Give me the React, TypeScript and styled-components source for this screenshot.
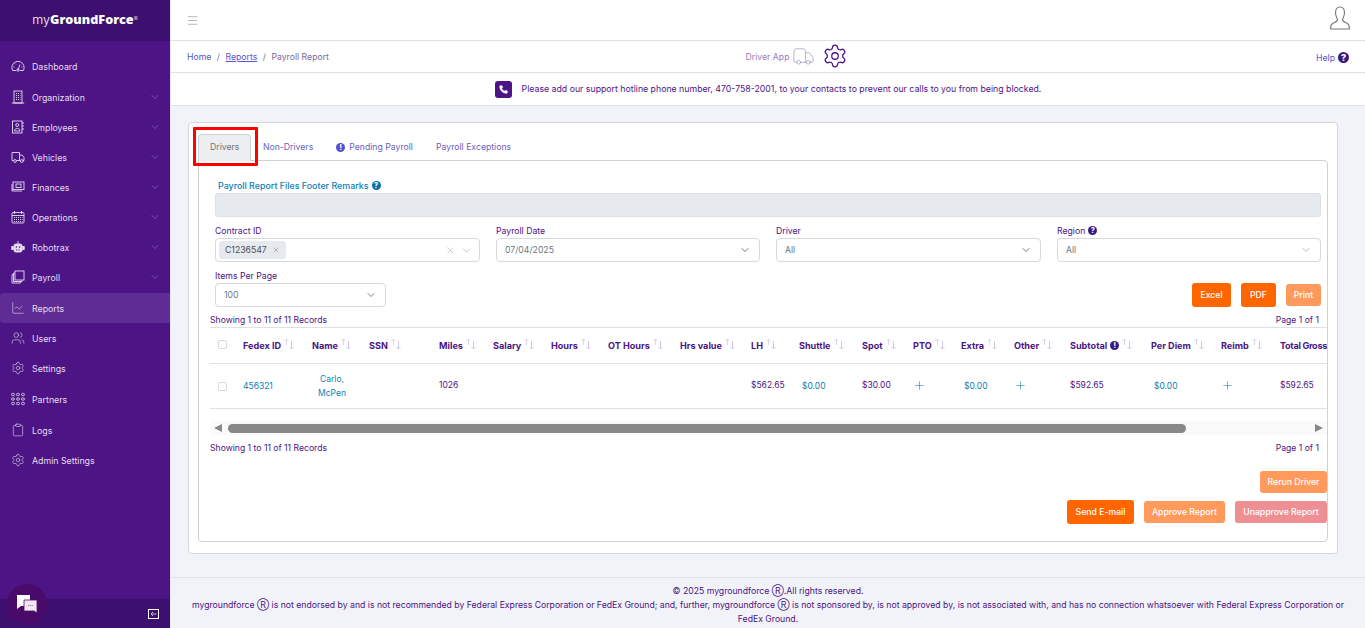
import React from "react";
import styled, { createGlobalStyle } from "styled-components";
import { ChartLine, Users, Settings, Clipboard, ChevronDown, Menu, X, Plus, Phone, Truck } from "lucide-react";

const PURPLE = "#4c1484";
const LINK = "#0a7fb5";
const FONT = `Inter, "Liberation Sans", sans-serif`;

const Global = createGlobalStyle`
  html, body { margin: 0; padding: 0; height: 628px; overflow: hidden; background: #fff; }
  #root { height: 628px; }
  * { box-sizing: border-box; }
  body { font-family: ${FONT}; font-size: 8.7px; color: ${PURPLE}; }
`;

const Page = styled.div`display: flex; width: 1365px; height: 628px; overflow: hidden; position: relative;`;
const Sidebar = styled.aside`width: 170px; flex: none; background: ${PURPLE}; display: flex; flex-direction: column; color: #e4d8f0;`;
const Brand = styled.div`height: 41px; background: #3d0f6e; color: #fff; display: flex; align-items: center; justify-content: center; font-size: 12.6px; padding-bottom: 3px; font-weight: 300;`;
const BrandBold = styled.b`font-weight: 900; font-family: "Open Sans", sans-serif;`;
const BrandMark = styled.sup`font-size: 6px; line-height: 0;`;
const Nav = styled.nav`padding-top: 10px; flex: 1; display: flex; flex-direction: column;`;
const Item = styled.div<{ $active?: boolean; $gap?: boolean }>`
  height: 30px; flex: none; display: flex; align-items: center; padding: 0 9px 0 11px; gap: 7px; margin-top: ${(p) => (p.$gap ? "1px" : "0")};
  background: ${(p) => (p.$active ? "#5f2b94" : "transparent")}; border-radius: ${(p) => (p.$active ? "3px 0 0 3px" : "0")};
  font-size: 8.8px; color: #e6dcf2;
  span { flex: 1; }
`;
const SideFoot = styled.div`height: 29px; background: #3d0f6e; display: flex; justify-content: flex-end; align-items: center; padding-right: 11px; color: #fff;`;
const Chat = styled.div`position: absolute; left: 7px; top: 584px; width: 40px; height: 40px; border-radius: 50%; background: #4a0a6a; display: flex; align-items: center; justify-content: center; color: #fff;`;

const Main = styled.main`flex: 1; min-width: 0; display: flex; flex-direction: column; background: #f1f3f8; border-left: 1px solid #e4e6ec;`;
const TopBar = styled.header`height: 41px; flex: none; background: #fff; border-bottom: 1px solid #dee1e8; display: flex; align-items: center; justify-content: space-between; padding: 0 15px 0 15px; color: #888;`;
const Crumbs = styled.div`height: 32px; flex: none; background: #fff; border-bottom: 1px solid #dee1e8; display: grid; grid-template-columns: 1fr auto 1fr; align-items: center; padding: 0 16px 0 16px;`;
const CrumbLeft = styled.div`display: flex; gap: 5.5px; font-size: 8.7px; color: #7a6aa0;`;
const CrumbLink = styled.a<{ $u?: boolean }>`color: #5a55c8; text-decoration: ${(p) => (p.$u ? "underline" : "none")};`;
const DriverApp = styled.div`display: flex; align-items: center; gap: 3px; color: #9a7cc0; font-size: 8.7px; position: relative; left: 29px;`;
const GearWrap = styled.div`color: ${PURPLE}; margin-left: 4px; display: flex; margin-top: -2px;`;
const Help = styled.div`justify-self: end; display: flex; align-items: center; gap: 3px; color: #5a55c8; font-size: 8.7px; padding-top: 2px;`;
const Dot = styled.span<{ $c?: string; $s?: number }>`
  display: inline-flex; align-items: center; justify-content: center; width: ${(p) => p.$s ?? 9}px; height: ${(p) => p.$s ?? 9}px; border-radius: 50%;
  background: ${(p) => p.$c ?? "#3a1a80"}; color: #fff; font-size: ${(p) => (p.$s ?? 9) - 2}px; font-weight: 800; line-height: 1;
`;
const Notice = styled.div`height: 33px; flex: none; background: #fff; border-bottom: 1px solid #dee1e8; display: flex; align-items: center; justify-content: center; gap: 10px; font-size: 8.75px;`;
const PhoneBox = styled.div`width: 17px; height: 17px; border-radius: 3px; background: ${PURPLE}; color: #fff; display: flex; align-items: center; justify-content: center;`;
const Content = styled.div`flex: 1; min-height: 0; padding: 16px 27px 24px 17px;`;
const Card = styled.div`height: 432px; background: #fff; border: 1px solid #d4d6da; border-radius: 4px; padding: 11px 9px 11px 9px; position: relative; display: flex; flex-direction: column;`;
const Tabs = styled.div`display: flex; height: 27px; flex: none; align-items: stretch; position: relative; margin-bottom: -1px; z-index: 1;`;
const Tab = styled.div<{ $active?: boolean }>`
  display: flex; align-items: center; gap: 4px; padding: 0 ${(p) => (p.$active ? "11px" : "10.5px")} 2px; font-size: 8.7px; height: 27px; border-radius: 4px 4px 0 0;
  color: ${(p) => (p.$active ? "#6c757d" : "#6a5fc0")}; background: ${(p) => (p.$active ? "#eceef0" : "transparent")};
  border: 1px solid ${(p) => (p.$active ? "#cfd1d4" : "transparent")}; border-bottom: none;
`;
const Highlight = styled.div`position: absolute; left: 4px; top: 4px; width: 65px; height: 39px; border: 3px solid #f00; pointer-events: none; z-index: 2; border-radius: 1px;`;
const Panel = styled.div`flex: 1; border: 1px solid #cfd1d4; border-radius: 0 4px 4px 4px; padding: 18px 0 0 0; display: flex; flex-direction: column; min-width: 0;`;
const Form = styled.div`padding: 0 6px 0 16px;`;
const RemarkLabel = styled.div`color: ${LINK}; font-size: 8.9px; font-weight: 500; padding-left: 3px; display: flex; align-items: center; gap: 3px; height: 13px;`;
const RemarkBox = styled.div`height: 24px; margin-top: 1px; background: #e6e9ee; border: 1px solid #dde0e5; border-radius: 3px;`;
const FilterGrid = styled.div`display: grid; grid-template-columns: 265px 264px 265px 264px; column-gap: 16px; margin-top: 8px;`;
const Field = styled.div`display: flex; flex-direction: column;`;
const Label = styled.label`font-size: 8.7px; height: 13px; padding-bottom: 2px; display: flex; align-items: center; gap: 3px;`;
const SelectBox = styled.div<{ $w?: number; $tight?: boolean }>`
  height: 24px; width: ${(p) => (p.$w ? `${p.$w}px` : "auto")}; border: 1px solid #d6d9de; border-radius: 4px; background: #fff; display: flex; align-items: center;
  padding: 0 ${(p) => (p.$tight ? "6px" : "8px")} 0 8px; font-size: 8.7px; color: #6c757d; gap: 4px; justify-content: space-between;
`;
const Chip = styled.span`height: 18px; background: #e6e9ee; border-radius: 3px; margin-left: -5px; padding: 0 6px; display: inline-flex; align-items: center; gap: 5px; color: #495057;`;
const Spacer = styled.div`flex: 1;`;
const PerRow = styled.div`display: flex; align-items: flex-end; gap: 10px; margin-top: 8px;`;
const Btn = styled.button<{ $bg?: string; $w: number; $h?: number }>`
  width: ${(p) => p.$w}px; height: ${(p) => p.$h ?? 22}px; border: none; border-radius: 3px; background: ${(p) => p.$bg ?? "#ff6600"}; color: #fff; font: 500 8.7px ${FONT}; padding: 0;
`;
const PrintBtn = styled(Btn)`margin-bottom: 1px;`;
const Meta = styled.div<{ $top: number }>`display: flex; justify-content: space-between; padding: 0 8px 0 11px; font-size: 8.65px; height: 14px; align-items: center; margin-top: ${(p) => p.$top}px;`;
const TableWrap = styled.div`margin: 0 0 0 11px; width: 1117px; overflow: hidden;`;
const Row = styled.div<{ $h: number }>`
  display: grid; height: ${(p) => p.$h}px; align-items: center; width: 1180px;
  grid-template-columns: 33px 69px 57px 70px 54px 58px 57px 72px 71px 48px 63px 51px 48px 53px 56px 81px 70px 59px 100px;
  border-bottom: 1px solid #dee1e8;
`;
const Head = styled(Row)`border-top: 1px solid #dee1e8; font-weight: 700; font-size: 9.1px;`;
const HeadCell = styled.div`display: flex; align-items: center; white-space: nowrap;`;
const LastHead = styled(HeadCell)`letter-spacing: -0.3px;`;
const HeadCheck = styled.div`margin-top: -3px;`;
const Cell = styled.div<{ $link?: boolean; $center?: boolean; $inset?: boolean }>`
  color: ${(p) => (p.$link ? LINK : PURPLE)}; font-size: 8.5px; line-height: 14px; white-space: nowrap;
  text-align: ${(p) => (p.$center ? "center" : "left")}; width: ${(p) => (p.$center ? "40px" : "auto")};
  padding-left: ${(p) => (p.$inset ? "3px" : "0")}; margin-top: ${(p) => (p.$link ? "0" : "-2px")};
`;
const Check = styled.div`width: 9px; height: 9px; border: 1px solid #d6d9de; border-radius: 2px; margin-left: 8px;`;
const ScrollBar = styled.div`margin: 12px 0 0 11px; width: 1117px; height: 14px; background: #fafafa; display: flex; align-items: center; padding: 0 4px; gap: 6px;`;
const Arrow = styled.span<{ $dir: "l" | "r" }>`
  width: 0; height: 0; border-top: 4.5px solid transparent; border-bottom: 4.5px solid transparent;
  ${(p) => (p.$dir === "l" ? "border-right: 8px solid #888;" : "border-left: 8px solid #888; margin-left: auto;")}
`;
const Thumb = styled.div`width: 958px; height: 9px; border-radius: 5px; background: #888;`;
const Actions = styled.div`margin-top: 16px; display: flex; flex-direction: column; align-items: flex-end; gap: 7px;`;
const ActionRow = styled.div`display: flex; align-items: center; gap: 10px;`;
const Footer = styled.footer`height: 51px; flex: none; border-top: 1px solid #dee1e8; background: #f1f3f8; padding: 6px 20px 0; text-align: center; font-size: 8.68px; line-height: 14px;`;
const SvgIcon = styled.svg`flex: none; fill: none; stroke: currentColor; stroke-width: 0.9;`;

const Ico = ({ children, s = 14 }: { children: React.ReactNode; s?: number }) => (
  <SvgIcon width={s} height={s} viewBox="0 0 14 14">{children}</SvgIcon>
);

const GaugeI = () => (
  <Ico>
    <path d="M1.6 11.5 A6 6 0 0 1 0.9 8.5 A6.1 6.1 0 0 1 13.1 8.5 A6 6 0 0 1 12.4 11.5 H9" />
    <path d="M5 11.5 H1.6 M7 11 L9 5.5 M2.5 8 H3.5 M4 4.5 L4.7 5.2 M11.5 8 H10.5" />
    <circle cx="7" cy="11" r="1.2" />
  </Ico>
);
const BuildingI = () => (
  <Ico>
    <rect x="3" y="1" width="8" height="12" />
    <path d="M0.8 13 H13.2" />
    <path strokeDasharray="1 1" d="M5 3.5 H9.5 M5 5.5 H9.5 M5 7.5 H9.5 M5 9.5 H9.5" />
  </Ico>
);
const BookI = () => (
  <Ico>
    <rect x="1.5" y="1" width="9.5" height="12" />
    <circle cx="6.2" cy="5" r="1.5" />
    <path d="M3.5 11 C3.5 7.5 9 7.5 9 11 Z M11 3 H13 M11 6 H13 M11 9 H13" />
  </Ico>
);
const TruckI = () => (
  <Ico>
    <path d="M2.5 10.5 H1 V2.5 H8.5 V10.5 H5.5 M8.5 5 H11 L13 7.5 V10.5 H12 M8.5 10.5 H9.5" />
    <circle cx="4" cy="11" r="1.4" />
    <circle cx="10.8" cy="11" r="1.4" />
  </Ico>
);
const FinanceI = () => (
  <Ico>
    <rect x="2" y="2" width="11" height="7.5" />
    <path d="M1 4 V11 H11" />
    <rect x="5" y="4" width="5" height="3.5" />
  </Ico>
);
const CalendarI = () => (
  <Ico>
    <rect x="1" y="2.5" width="12" height="10.5" rx="1" />
    <path d="M3.5 1 V4 M10.5 1 V4 M1 5.5 H13" />
    <path strokeDasharray="1 1" d="M3 7.5 H11.5 M3 9.5 H11.5 M3 11.5 H11.5" />
  </Ico>
);
const BotI = () => (
  <Ico>
    <path d="M7 1 V4" />
    <rect x="3" y="4" width="8" height="8" rx="1.8" fill="currentColor" />
    <rect x="0.8" y="6.5" width="1.5" height="3" fill="currentColor" />
    <rect x="11.7" y="6.5" width="1.5" height="3" fill="currentColor" />
    <circle cx="5.4" cy="7" r="0.8" fill="#4c1484" stroke="none" />
    <circle cx="8.6" cy="7" r="0.8" fill="#4c1484" stroke="none" />
    <path d="M5 10 H9" stroke="#4c1484" strokeDasharray="1 0.7" />
  </Ico>
);
const CopyI = () => (
  <Ico>
    <rect x="4" y="1" width="9" height="9" />
    <path d="M4 3 H2.5 V11.5 H11 V10 M2.5 4.5 H1 V13 H9.5 V11.5" />
  </Ico>
);
const GridI = () => (
  <Ico>
    {[2, 7, 12].map((x) => [2.5, 7, 11.5].map((y) => <rect key={`${x}${y}`} x={x - 1.4} y={y - 1.1} width="2.8" height="2.2" rx="0.9" />))}
  </Ico>
);
const Lu = (C: React.ElementType) => () => <C size={14} strokeWidth={1} />;

const SortIcon = () => (
  <svg width="14" height="13" viewBox="0 0 14 13" fill="none" stroke="#d3c8e6" strokeWidth="1" style={{ marginLeft: 2, marginTop: -2, flex: "none" }}>
    <path d="M3.5 7 V1 M1.5 3 L3.5 1 L5.5 3" opacity="0.75" />
    <path d="M8.5 3 V11 M6.5 9 L8.5 11 L10.5 9" />
  </svg>
);

const nav: [string, React.ElementType, boolean, boolean?, boolean?][] = [
  ["Dashboard", GaugeI, false],
  ["Organization", BuildingI, true, false, true],
  ["Employees", BookI, true],
  ["Vehicles", TruckI, true],
  ["Finances", FinanceI, true],
  ["Operations", CalendarI, true],
  ["Robotrax", BotI, true],
  ["Payroll", CopyI, true],
  ["Reports", Lu(ChartLine), false, true, true],
  ["Users", Lu(Users), false],
  ["Settings", Lu(Settings), false],
  ["Partners", GridI, false, false, true],
  ["Logs", Lu(Clipboard), false, false, true],
  ["Admin Settings", Lu(Settings), false],
];

const heads = ["Fedex ID", "Name", "SSN", "Miles", "Salary", "Hours", "OT Hours", "Hrs value", "LH", "Shuttle", "Spot", "PTO", "Extra", "Other", "Subtotal", "Per Diem", "Reimb"];

const PlusCell = () => <div><Plus size={13} color="#0a6fa0" strokeWidth={1} /></div>;

export default function App() {
  return (
    <Page>
      <Global />
      <Sidebar>
        <Brand>my<BrandBold>GroundForce</BrandBold><BrandMark>®</BrandMark></Brand>
        <Nav>
          {nav.map(([label, Icon, chev, active, gap]) => (
            <Item key={label} $active={active} $gap={gap}>
              <Icon />
              <span>{label}</span>
              {chev && <ChevronDown size={12} strokeWidth={1} color="#a78fc8" />}
            </Item>
          ))}
        </Nav>
        <SideFoot>
          <svg width="11" height="10" viewBox="0 0 11 10" fill="none" stroke="#fff" strokeWidth="1">
            <rect x="0.5" y="0.5" width="10" height="9" />
            <path d="M8.5 5 H3 M5 3 L3 5 L5 7" stroke="#cdb9e4" />
          </svg>
        </SideFoot>
      </Sidebar>
      <Chat>
        <svg width="22" height="20" viewBox="0 0 22 20">
          <path d="M1 1 H14 V12 H5 L1 15 Z" fill="#fff" />
          <path d="M8 6 H21 V17 V19 L18 17 H8 Z" fill="#f2e6f2" stroke="#4a0a6a" strokeWidth="0.8" />
          <path d="M12 11.5 H17" stroke="#8a70a8" strokeWidth="1.2" strokeDasharray="1.2 0.9" />
        </svg>
      </Chat>
      <Main>
        <TopBar>
          <Menu size={13} strokeWidth={1.1} />
          <svg width="22" height="24" viewBox="0 0 22 24" fill="none" stroke="#777" strokeWidth="1.1" style={{ marginRight: -1, marginTop: -5 }}>
            <path d="M11 1 C7.5 1 6.5 4 6.5 7 C6.5 10 8 12 8.5 13.5 C8.8 15.5 6 16 3.5 17.5 C2 18.5 1.5 20 1.5 23 H20.5 C20.5 20 20 18.5 18.5 17.5 C16 16 13.2 15.5 13.5 13.5 C14 12 15.5 10 15.5 7 C15.5 4 14.5 1 11 1 Z" />
          </svg>
        </TopBar>
        <Crumbs>
          <CrumbLeft>
            <CrumbLink>Home</CrumbLink><span>/</span><CrumbLink $u>Reports</CrumbLink><span>/</span><span>Payroll Report</span>
          </CrumbLeft>
          <DriverApp>
            Driver App
            <Truck size={23} strokeWidth={0.8} color="#a89cc0" />
            <GearWrap><Settings size={26} strokeWidth={1.2} /></GearWrap>
          </DriverApp>
          <Help>Help <Dot $s={11}>?</Dot></Help>
        </Crumbs>
        <Notice>
          <PhoneBox><Phone size={9} fill="#fff" /></PhoneBox>
          Please add our support hotline phone number, 470-758-2001, to your contacts to prevent our calls to you from being blocked.
        </Notice>
        <Content>
          <Card>
            <Highlight />
            <Tabs>
              <Tab $active>Drivers</Tab>
              <Tab>Non-Drivers</Tab>
              <Tab><Dot $c="#5a4fd0">!</Dot>Pending Payroll</Tab>
              <Tab>Payroll Exceptions</Tab>
            </Tabs>
            <Panel>
              <Form>
                <RemarkLabel>Payroll Report Files Footer Remarks <Dot $c="#0a6fa8">?</Dot></RemarkLabel>
                <RemarkBox />
                <FilterGrid>
                  <Field>
                    <Label>Contract ID</Label>
                    <SelectBox $tight>
                      <Chip>C1236547 <X size={8} strokeWidth={1} /></Chip>
                      <Spacer />
                      <X size={11} strokeWidth={1} color="#999" />
                      <ChevronDown size={13} strokeWidth={1} color="#999" />
                    </SelectBox>
                  </Field>
                  <Field>
                    <Label>Payroll Date</Label>
                    <SelectBox>07/04/2025<ChevronDown size={12} strokeWidth={1.4} color="#444" /></SelectBox>
                  </Field>
                  <Field>
                    <Label>Driver</Label>
                    <SelectBox>All<ChevronDown size={12} strokeWidth={1.4} color="#444" /></SelectBox>
                  </Field>
                  <Field>
                    <Label>Region <Dot>?</Dot></Label>
                    <SelectBox>All<ChevronDown size={12} strokeWidth={1} color="#777" /></SelectBox>
                  </Field>
                </FilterGrid>
                <PerRow>
                  <Field>
                    <Label>Items Per Page</Label>
                    <SelectBox $w={171}>100<ChevronDown size={12} strokeWidth={1.4} color="#444" /></SelectBox>
                  </Field>
                  <Spacer />
                  <Btn $w={39} $h={24}>Excel</Btn>
                  <Btn $w={35} $h={24}>PDF</Btn>
                  <PrintBtn $w={35} $bg="#ff9a5c">Print</PrintBtn>
                </PerRow>
              </Form>
              <Meta $top={6}><span>Showing 1 to 11 of 11 Records</span><span>Page 1 of 1</span></Meta>
              <TableWrap>
                <Head $h={37}>
                  <HeadCheck><Check /></HeadCheck>
                  {heads.map((h) => (
                    <HeadCell key={h}>
                      {h}
                      {h === "Subtotal" && <Dot style={{ marginLeft: 3 }}>!</Dot>}
                      <SortIcon />
                    </HeadCell>
                  ))}
                  <LastHead>Total Gross</LastHead>
                </Head>
                <Row $h={45}>
                  <div><Check /></div>
                  <Cell $link>456321</Cell>
                  <Cell $link $center>Carlo,<br />McPen</Cell>
                  <div />
                  <Cell>1026</Cell>
                  <div /><div /><div /><div />
                  <Cell>$562.65</Cell>
                  <Cell $link $inset>$0.00</Cell>
                  <Cell>$30.00</Cell>
                  <PlusCell />
                  <Cell $link $inset>$0.00</Cell>
                  <PlusCell />
                  <Cell>$592.65</Cell>
                  <Cell $link $inset>$0.00</Cell>
                  <PlusCell />
                  <Cell>$592.65</Cell>
                </Row>
              </TableWrap>
              <ScrollBar>
                <Arrow $dir="l" />
                <Thumb />
                <Arrow $dir="r" />
              </ScrollBar>
              <Meta $top={6}><span>Showing 1 to 11 of 11 Records</span><span>Page 1 of 1</span></Meta>
              <Actions>
                <Btn $w={67} $bg="#ff9a5c">Rerun Driver</Btn>
                <ActionRow>
                  <Btn $w={67} $h={24}>Send E-mail</Btn>
                  <Btn $w={81} $bg="#ff9a5c">Approve Report</Btn>
                  <Btn $w={92} $bg="#ee8f93">Unapprove Report</Btn>
                </ActionRow>
              </Actions>
            </Panel>
          </Card>
        </Content>
        <Footer>
          © 2025 mygroundforce Ⓡ.All rights reserved.<br />
          mygroundforce Ⓡ is not endorsed by and is not recommended by Federal Express Corporation or FedEx Ground; and, further, mygroundforce Ⓡ is not sponsored by, is not approved by, is not associated with, and has no connection whatsoever with Federal Express Corporation or FedEx Ground.
        </Footer>
      </Main>
    </Page>
  );
}
